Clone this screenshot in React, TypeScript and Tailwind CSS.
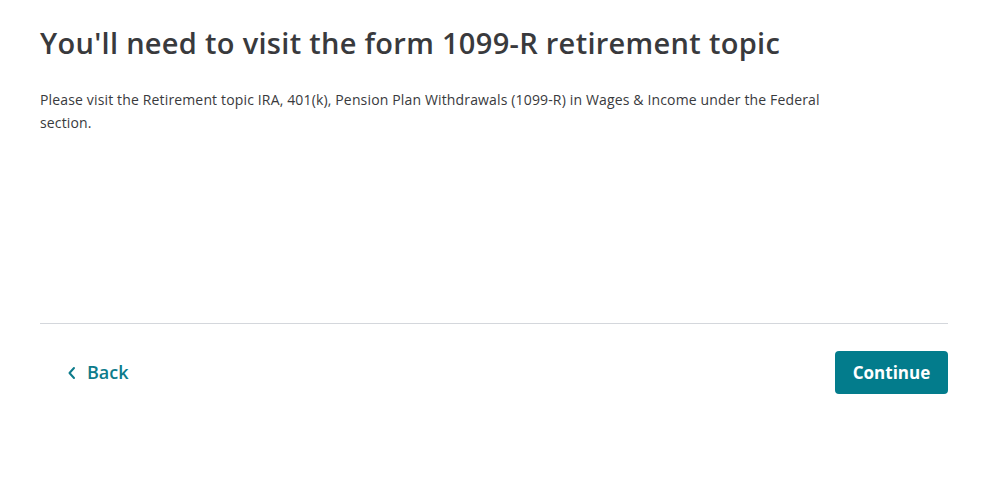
import React from "react";

export default function App() {
  return (
    <div className="w-[999px] h-[492px] bg-white" style={{ fontFamily: "'Open Sans', 'Noto Sans', sans-serif" }}>
      <div className="pl-10 pr-[51px] pt-[25px]">
        <h1 className="text-[29px] leading-[36px] font-semibold text-[#393a3d] tracking-[0.3px]">
          You'll need to visit the form 1099-R retirement topic
        </h1>
        <p className="mt-[27px] w-[790px] text-[14px] leading-[23px] text-[#393a3d] tracking-[0.15px]">
          Please visit the Retirement topic IRA, 401(k), Pension Plan Withdrawals (1099-R) in Wages &amp; Income under the Federal section.
        </p>
        <div className="mt-[189px] border-t border-[#d4d7dc]" />
        <div className="mt-[27px] flex items-center justify-between">
          <button className="ml-[27px] flex items-center gap-[11px] text-[#0d7b8b] text-[18px] font-semibold">
            <svg width="9" height="14" viewBox="0 0 9 14" fill="none">
              <path d="M7 2 L2.5 7 L7 12" stroke="#0d7b8b" strokeWidth="2" strokeLinecap="round" strokeLinejoin="round" />
            </svg>
            Back
          </button>
          <button className="w-[113px] h-[43px] rounded-[4px] bg-[#037c8c] text-white text-[17px] font-bold">
            Continue
          </button>
        </div>
      </div>
    </div>
  );
}
